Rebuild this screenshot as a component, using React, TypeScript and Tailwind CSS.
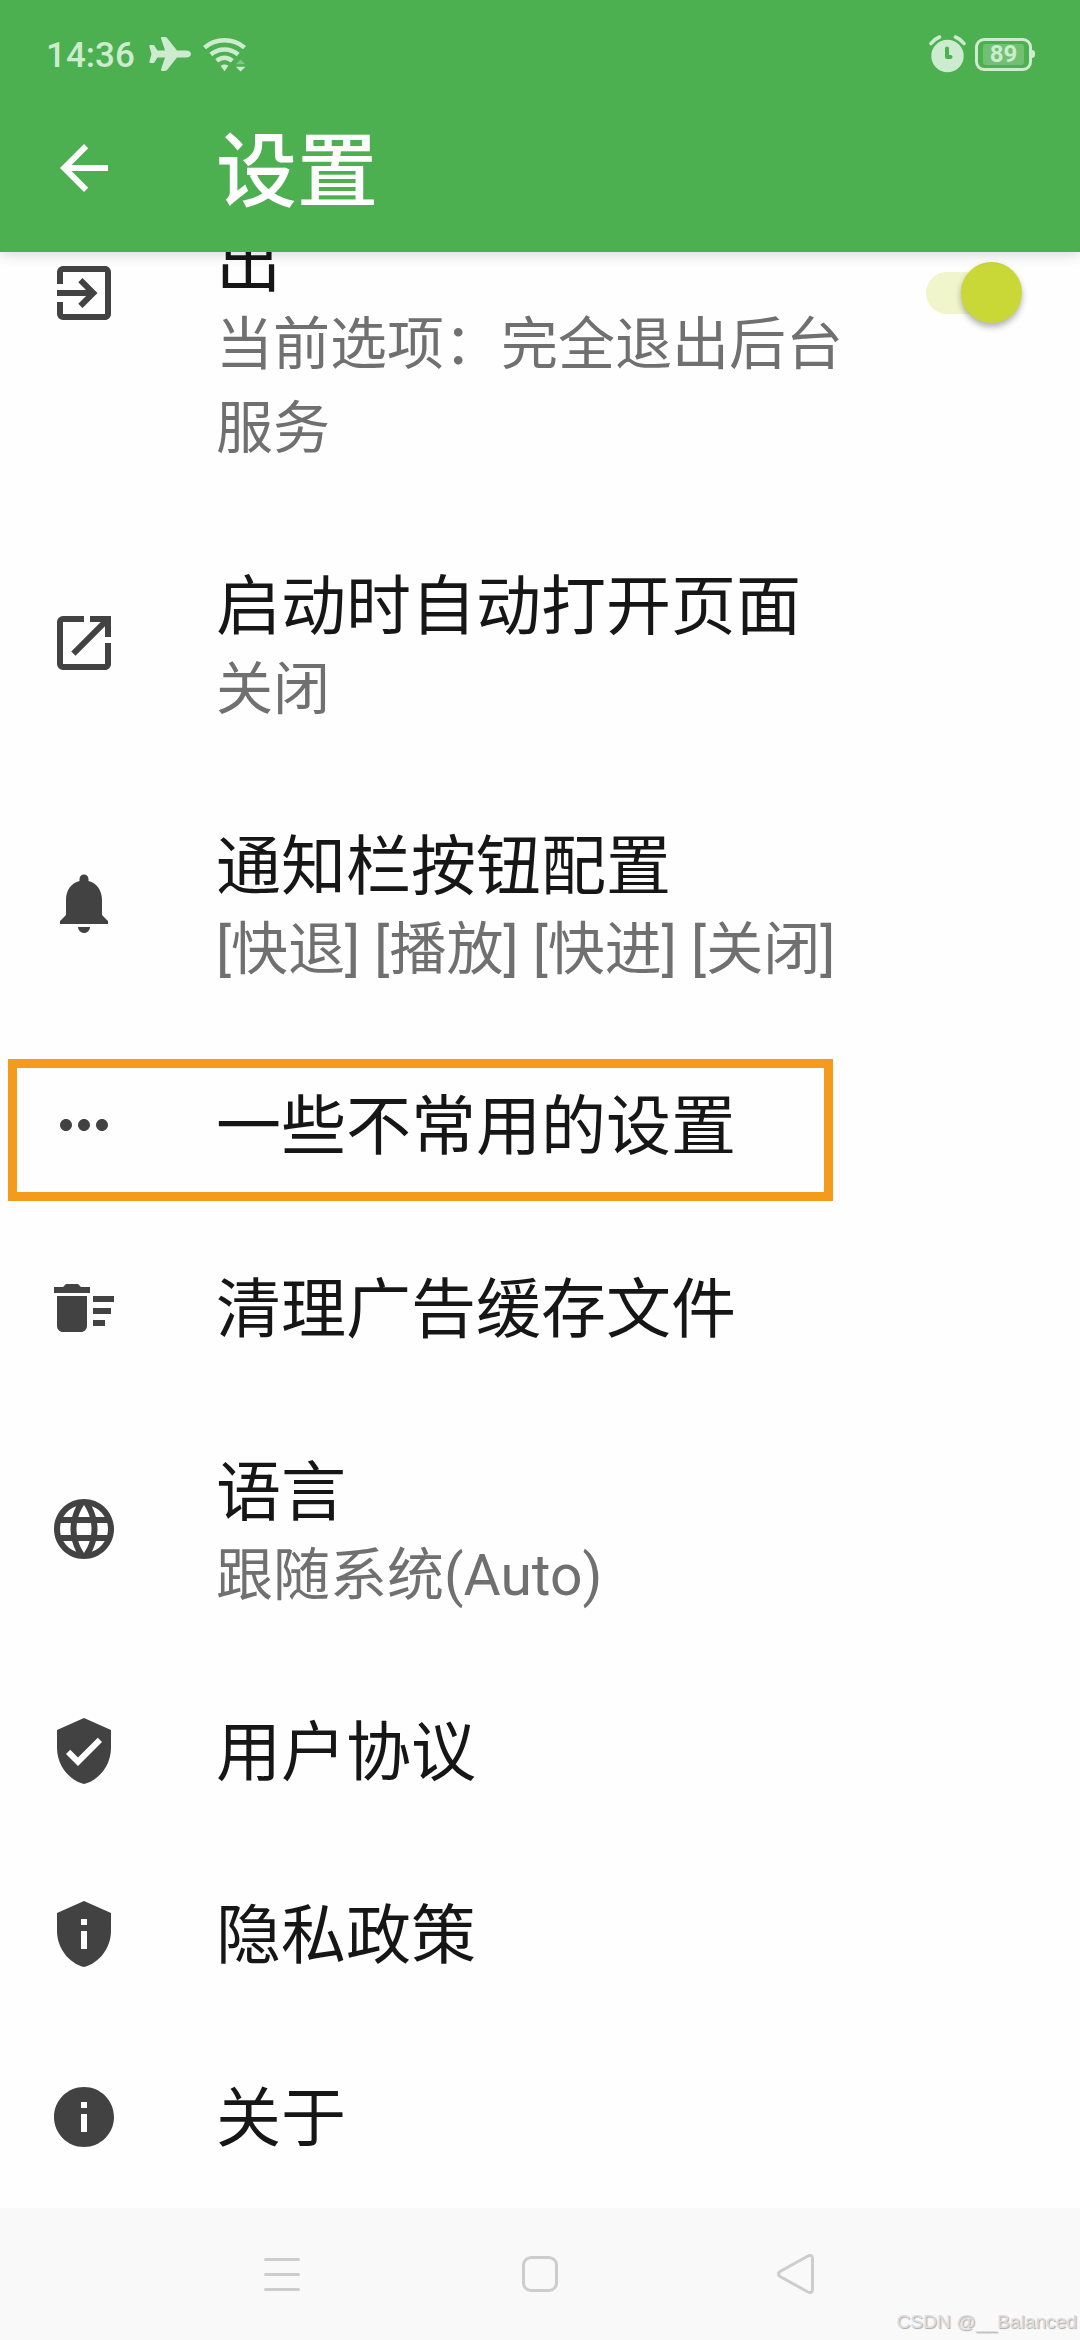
import type { ReactNode } from 'react';
import {
  MdArrowBack,
  MdDeleteSweep,
  MdExitToApp,
  MdInfo,
  MdLanguage,
  MdMoreHoriz,
  MdNotifications,
  MdOpenInNew,
  MdPrivacyTip,
  MdVerifiedUser,
} from 'react-icons/md';

interface SettingRowProps {
  icon: ReactNode;
  title: string;
  summary?: string;
  highlighted?: boolean;
}

function SettingRow({ icon, title, summary, highlighted }: SettingRowProps) {
  return (
    <li className={`relative flex shrink-0 items-center pl-12 ${summary ? 'h-[260px]' : 'h-[183px]'}`}>
      <span className="w-[168px] shrink-0 text-[72px] text-[#424242]">{icon}</span>
      <div className={summary ? 'pt-[14px]' : 'pt-[9px]'}>
        <p className="h-[80px] text-[65px] leading-[76px] text-[#161616]">{title}</p>
        {summary && <p className="h-[82px] text-[57px] leading-[82px] text-[#707070]">{summary}</p>}
      </div>
      {highlighted && (
        <span className="absolute left-2 top-[26px] h-[142px] w-[825px] border-[9px] border-[#f49b1b]" />
      )}
    </li>
  );
}

function StatusBar() {
  return (
    <div className="flex h-[84px] items-center justify-between pl-[46px] pr-[45px] pt-6 text-[#cdebce]">
      <div className="flex items-center">
        <span className="w-[103px] pt-1 text-[35px] font-medium leading-[56px]">14:36</span>
        <svg className="h-[34px] w-[42px]" viewBox="0 0 42 34" fill="currentColor">
          <path d="M13 0h3c1 0 1.900.500 2.500 1.400L28 13.500h9.500c2.700 0 4.500 1.500 4.500 3.500s-1.800 3.500-4.500 3.500H28L18.500 32.600c-.6.900-1.500 1.400-2.500 1.400h-3c-.8 0-1.200-.6-1-1.400L16 20.500H8.500L5 26H1.500C.6 26 .200 25.400.400 24.600L2.500 17 .400 9.400C.200 8.600.6 8 1.500 8H5l3.500 5.500H16L12 1.400C11.800.6 12.200 0 13 0z" />
        </svg>
        <svg className="ml-3 mt-[2px] h-[36px] w-[43px]" viewBox="0 0 44 36" fill="none" stroke="currentColor" strokeWidth="4.600">
          <path d="M1.500 10.500C13 .5 31 .5 42.500 10.500" />
          <path d="M8 17.500c8-7 20-7 28 0" />
          <path d="M14 24c5-4.200 11-4.200 16 0" />
          <path d="M18 29c2.500-1.800 5.500-1.800 8 0l-4 5.500z" fill="currentColor" stroke="none" />
          <path d="M33.500 27.500l5-5 5 5z" fill="currentColor" stroke="none" opacity=".4" />
          <path d="M33.500 30h10l-5 5z" fill="currentColor" stroke="none" />
        </svg>
      </div>
      <div className="flex items-center">
        <svg className="h-[38px] w-[37px]" viewBox="0 0 37 38">
          <circle cx="18.500" cy="21" r="16.200" fill="currentColor" />
          <path d="M2 8.500Q5.500 4 10.500 2M35 8.500Q31.500 4 26.500 2" fill="none" stroke="currentColor" strokeWidth="3.600" strokeLinecap="round" />
          <path d="M18 13.500v8.500h3.500" fill="none" stroke="#4caf50" strokeWidth="4" strokeLinecap="round" strokeLinejoin="round" />
        </svg>
        <div className="ml-[9px] flex h-[33px] w-[57px] items-center justify-center rounded-[9px] border-[3px] border-current">
          <span className="flex h-[21px] w-[41px] items-center justify-center rounded-[3px] bg-[#71c074] text-[24px] font-bold leading-none">
            89
          </span>
        </div>
        <span className="h-2 w-[3px] rounded-r-full bg-current" />
      </div>
    </div>
  );
}

export default function App() {
  return (
    <div
      lang="zh-CN"
      className="flex h-[2340px] w-[1080px] flex-col overflow-hidden bg-[#fefefe] font-[Roboto,'Noto_Sans_CJK_SC',sans-serif]"
    >
      <header className="relative z-10 h-[252px] shrink-0 bg-[#4caf50] shadow-[0_2px_14px_rgba(0,0,0,0.16)]">
        <StatusBar />
        <div className="flex h-[168px] items-center pl-12 text-white">
          <MdArrowBack className="mr-24 size-[72px]" />
          <h1 className="pt-[9px] text-[81px] font-medium leading-[100px]">设置</h1>
        </div>
      </header>

      <ul className="flex flex-1 flex-col overflow-hidden">
        {/* First entry is scrolled partly under the app bar */}
        <li className="flex h-[261px] shrink-0 pl-12">
          <span className="w-[168px] shrink-0 pt-[5px] text-[72px] text-[#424242]">
            <MdExitToApp />
          </span>
          <div className="-mt-[26px] w-[650px]">
            <p className="h-[77px] text-[65px] leading-[76px] text-[#161616]">出</p>
            <p className="text-[57px] leading-[84px] text-[#707070]">当前选项：完全退出后台服务</p>
          </div>
          <div className="ml-[60px] mt-[10px] flex h-[61px] w-[96px] items-center">
            <span className="h-[42px] w-[70px] rounded-full bg-[#f0f5cc]" />
            <span className="-ml-[35px] size-[61px] rounded-full bg-[#c9d837] shadow-[0_4px_6px_rgba(0,0,0,0.3)]" />
          </div>
        </li>
        <SettingRow icon={<MdOpenInNew />} title="启动时自动打开页面" summary="关闭" />
        <SettingRow icon={<MdNotifications />} title="通知栏按钮配置" summary="[快退] [播放] [快进] [关闭]" />
        <SettingRow icon={<MdMoreHoriz />} title="一些不常用的设置" highlighted />
        <SettingRow icon={<MdDeleteSweep />} title="清理广告缓存文件" />
        <SettingRow icon={<MdLanguage />} title="语言" summary="跟随系统(Auto)" />
        <SettingRow icon={<MdVerifiedUser />} title="用户协议" />
        <SettingRow icon={<MdPrivacyTip />} title="隐私政策" />
        <SettingRow icon={<MdInfo />} title="关于" />
      </ul>

      <nav className="relative flex h-[132px] shrink-0 items-center bg-[#f9f9f9] pl-[264px] text-[#cdcdcd]">
        <svg className="size-9" viewBox="0 0 36 36" stroke="currentColor" strokeWidth="3" strokeLinecap="round">
          <path d="M1.500 3.500h33M1.500 18.500h33M1.500 33.500h33" />
        </svg>
        <span className="ml-[222px] size-9 rounded-[9px] border-[3px] border-current" />
        <svg className="ml-[219px] h-10 w-[38px]" viewBox="0 0 38 40" fill="none" stroke="currentColor" strokeWidth="3" strokeLinejoin="round">
          <path d="M3 17.500L31 2Q35.500 0 35.500 5V35Q35.500 40 31 38L3 22.500Q0 20 3 17.500z" />
        </svg>
        <span className="absolute bottom-1 right-[3px] font-['Liberation_Sans',sans-serif] text-[19.2px] leading-[28px] text-[#dedede] [text-shadow:1px_1px_1px_#aaa]">
          CSDN @__Balanced
        </span>
      </nav>
    </div>
  );
}
